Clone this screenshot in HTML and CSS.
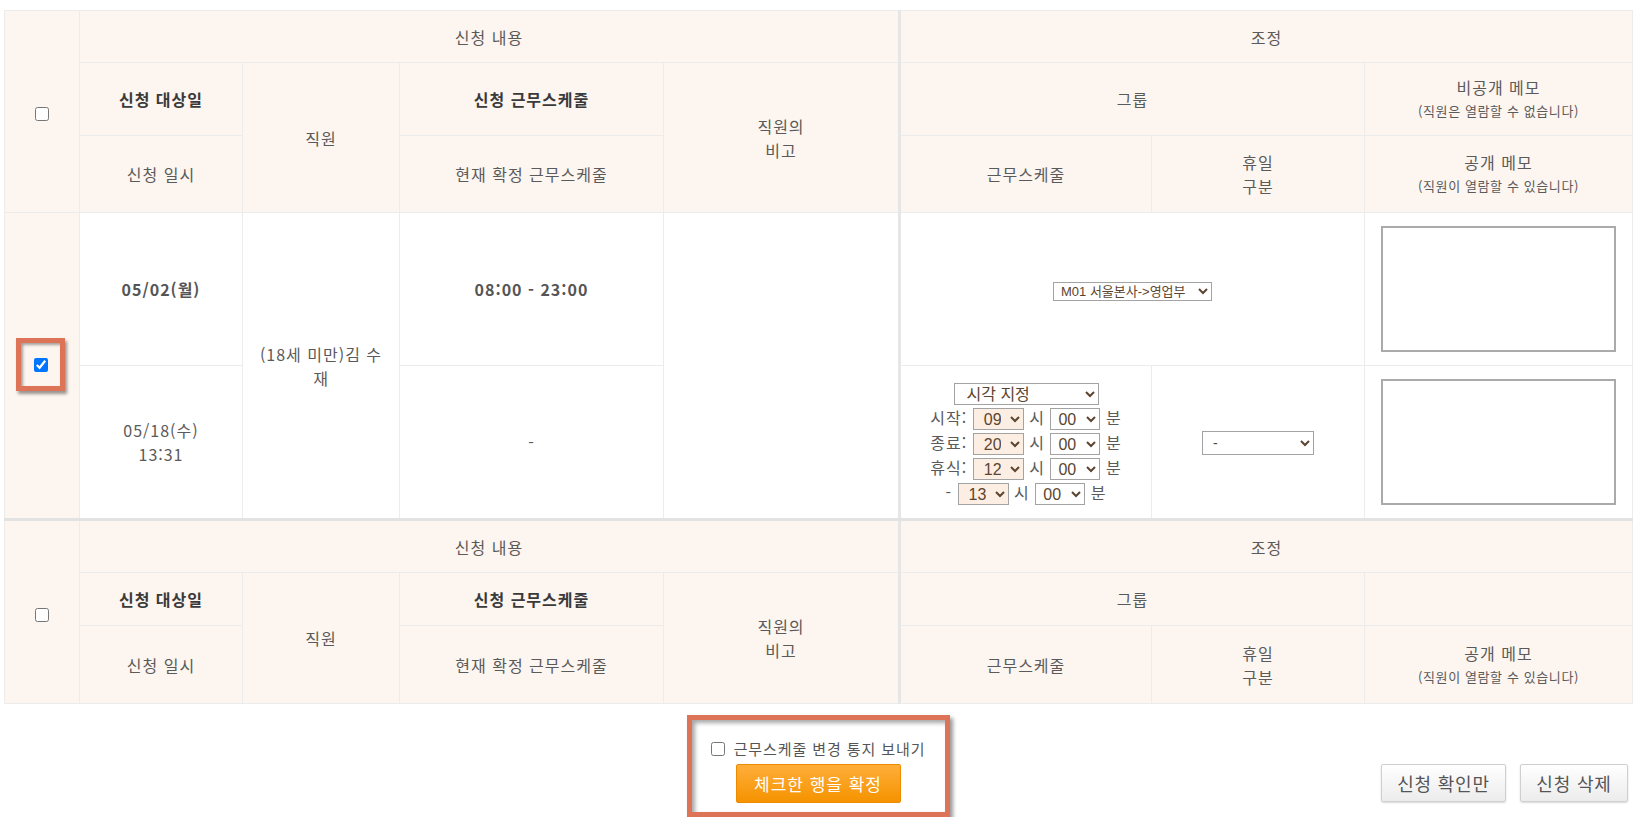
FILE: index.html
```html
<!DOCTYPE html>
<html lang="ko">
<head>
<meta charset="utf-8">
<title>근무스케줄 신청</title>
<link rel="stylesheet" href="styles.css">
</head>
<body>
<div class="page">
  <table class="req">
    <colgroup>
      <col class="c-chk"><col class="c-date"><col class="c-emp"><col class="c-sched"><col class="c-note">
      <col class="c-adj"><col class="c-hol"><col class="c-memo">
    </colgroup>
    <tbody class="hd">
      <tr class="ha">
        <td rowspan="3"><input type="checkbox"></td>
        <td colspan="4">신청 내용</td>
        <td colspan="3" class="sep">조정</td>
      </tr>
      <tr class="hb">
        <td class="b">신청 대상일</td>
        <td rowspan="2">직원</td>
        <td class="b">신청 근무스케줄</td>
        <td rowspan="2">직원의<br>비고</td>
        <td colspan="2" class="sep">그룹</td>
        <td class="memo-h">비공개 메모<br><span class="small">(직원은 열람할 수 없습니다)</span></td>
      </tr>
      <tr class="hc">
        <td>신청 일시</td>
        <td>현재 확정 근무스케줄</td>
        <td class="sep">근무스케줄</td>
        <td>휴일<br>구분</td>
        <td class="memo-h">공개 메모<br><span class="small">(직원이 열람할 수 있습니다)</span></td>
      </tr>
    </tbody>
    <tbody class="data">
      <tr class="d1">
        <td rowspan="2" class="chkcell last"><span class="mark"><input type="checkbox" checked></span></td>
        <td class="strong">05/02(월)</td>
        <td rowspan="2" class="emp last">(18세 미만)김 수재</td>
        <td class="strong">08:00 - 23:00</td>
        <td rowspan="2" class="last"></td>
        <td colspan="2" class="sep"><select class="sel sel-group"><option>M01 서울본사-&gt;영업부</option></select></td>
        <td><textarea class="memo"></textarea></td>
      </tr>
      <tr class="d2">
        <td>05/18(수)<br>13:31</td>
        <td>-</td>
        <td class="sep">
          <div class="timeset">
            <div class="tline"><select class="sel sel-mode"><option>시각 지정</option></select></div>
            <div class="tline">시작: <select class="sel sel-h"><option>09</option></select> 시 <select class="sel sel-m"><option>00</option></select> 분</div>
            <div class="tline">종료: <select class="sel sel-h"><option>20</option></select> 시 <select class="sel sel-m"><option>00</option></select> 분</div>
            <div class="tline">휴식: <select class="sel sel-h"><option>12</option></select> 시 <select class="sel sel-m"><option>00</option></select> 분</div>
            <div class="tline">- <select class="sel sel-h"><option>13</option></select> 시 <select class="sel sel-m"><option>00</option></select> 분</div>
          </div>
        </td>
        <td><select class="sel sel-hol"><option>-</option></select></td>
        <td><textarea class="memo"></textarea></td>
      </tr>
    </tbody>
    <tbody class="hd">
      <tr class="ha2">
        <td rowspan="3"><input type="checkbox"></td>
        <td colspan="4">신청 내용</td>
        <td colspan="3" class="sep">조정</td>
      </tr>
      <tr class="hb2">
        <td class="b">신청 대상일</td>
        <td rowspan="2">직원</td>
        <td class="b">신청 근무스케줄</td>
        <td rowspan="2">직원의<br>비고</td>
        <td colspan="2" class="sep">그룹</td>
        <td></td>
      </tr>
      <tr class="hc2">
        <td>신청 일시</td>
        <td>현재 확정 근무스케줄</td>
        <td class="sep">근무스케줄</td>
        <td>휴일<br>구분</td>
        <td class="memo-h">공개 메모<br><span class="small">(직원이 열람할 수 있습니다)</span></td>
      </tr>
    </tbody>
  </table>

  <div class="footer">
    <div class="f-left"></div>
    <div class="f-center">
      <label class="notify"><input type="checkbox"> 근무스케줄 변경 통지 보내기</label>
      <button class="btn-confirm" type="button">체크한 행을 확정</button>
    </div>
    <div class="f-right">
      <button class="btn-gray btn-ack" type="button">신청 확인만</button>
      <button class="btn-gray btn-del" type="button">신청 삭제</button>
    </div>
  </div>
</div>
</body>
</html>
```

FILE: styles.css
```css
* { box-sizing: border-box; }

body {
  margin: 0;
  font-family: "Noto Sans CJK KR", "Liberation Sans", sans-serif;
  font-size: 16px;
  letter-spacing: 1px;
  color: #5a5a5a;
  background: #fff;
}

.page {
  padding: 10px 13px 0 4px;
}

.req {
  width: 1628px;
  border-collapse: collapse;
  table-layout: fixed;
  border: 1px solid #ececec;
}

.c-chk { width: 75px; }
.c-date { width: 163px; }
.c-emp { width: 157px; }
.c-sched { width: 264px; }
.c-note { width: 236px; }
.c-adj { width: 252px; }
.c-hol { width: 213px; }
.c-memo { width: 268px; }

.req td {
  border: 1px solid #ececec;
  text-align: center;
  vertical-align: middle;
  padding: 0 14px;
  line-height: 24px;
}

.req td.sep {
  border-left: 3px solid #e6e6e6;
}

.hd td {
  background: #fdf5ef;
}

.req td.b {
  font-weight: bold;
  color: #3a3a3a;
}

.ha td { height: 52px; }
.hb td { height: 73px; }
.hc td { height: 77px; }

.ha2 td { height: 53px; }
.hb2 td { height: 53px; }
.hc2 td { height: 78px; }

.d1 td { height: 153px; }
.d2 td { height: 154px; }

.req .d2 td,
.req td.last {
  border-bottom: 3px solid #e2e2e2;
}

.req td.chkcell {
  background: #fdf5ef;
}

.req td.memo-h {
  line-height: 22px;
}

.small {
  font-size: 13px;
  letter-spacing: 0.6px;
  color: #5a5a5a;
}

.strong {
  font-weight: bold;
  color: #555;
}

.req td.emp {
  padding: 0 14px;
}

input[type="checkbox"] {
  width: 14px;
  height: 14px;
  margin: 0;
  vertical-align: middle;
}

.mark {
  display: inline-flex;
  align-items: center;
  justify-content: center;
  width: 49px;
  height: 53px;
  border: 5px solid #dd7457;
  box-shadow: 2px 3px 3px rgba(0, 0, 0, 0.4), inset 2px 2px 3px rgba(0, 0, 0, 0.35);
  margin-top: -2px;
  margin-left: -3px;
}

.sel {
  font-family: "Liberation Sans", "Noto Sans CJK KR", sans-serif;
  color: #5b4530;
  border: 1px solid #a3a3a3;
  border-radius: 0;
  background-color: #fff;
  padding: 0 2px;
  vertical-align: middle;
  letter-spacing: 0;
  line-height: 1;
}

.sel-group {
  width: 159px;
  height: 19px;
  font-size: 13px;
  padding: 0 3px;
}

.timeset {
  display: flex;
  flex-direction: column;
  align-items: center;
}

.tline {
  height: 25px;
  line-height: 25px;
  white-space: nowrap;
}

.sel-mode {
  width: 145px;
  height: 22px;
  font-size: 16px;
  padding: 0 8px;
}

.sel-h {
  width: 51px;
  height: 22px;
  font-size: 16px;
  background-color: #fdeee3;
  padding: 0 6px;
}

.sel-m {
  width: 50px;
  height: 22px;
  font-size: 16px;
  padding: 0 3px;
}

.sel-hol {
  width: 112px;
  height: 24px;
  font-size: 14px;
  padding: 0 6px;
}

.memo {
  display: block;
  margin: 0 auto;
  width: 235px;
  height: 126px;
  border: 2px solid #aaaaaa;
  resize: none;
  background: #fff;
}

.footer {
  width: 1628px;
  display: grid;
  grid-template-columns: 1fr auto 1fr;
  margin-top: 11px;
}

.f-center {
  display: flex;
  flex-direction: column;
  align-items: center;
  width: 263px;
  height: 102px;
  border: 5px solid #dd7457;
  box-shadow: 3px 3px 4px rgba(0, 0, 0, 0.4), inset 3px 3px 4px rgba(0, 0, 0, 0.35);
  padding-top: 19px;
}

.notify {
  display: flex;
  align-items: center;
  gap: 9px;
  font-size: 15px;
  letter-spacing: 0.9px;
  line-height: 20px;
  color: #555;
  height: 20px;
  white-space: nowrap;
}

.btn-confirm {
  margin-top: 5px;
  width: 165px;
  height: 39px;
  border: 1px solid #ee8a00;
  border-radius: 2px;
  background: linear-gradient(#ffae3a, #f59300);
  color: #fff;
  font-family: "Noto Sans CJK KR", "Liberation Sans", sans-serif;
  font-size: 17px;
  letter-spacing: 1px;
  padding: 0;
}

.f-right {
  display: flex;
  justify-content: flex-end;
  align-items: flex-end;
  gap: 14px;
  padding-right: 4px;
  padding-bottom: 15px;
}

.btn-gray {
  height: 38px;
  border: 1px solid #cfcfcf;
  border-radius: 2px;
  background: linear-gradient(#ffffff, #ececec);
  box-shadow: 0 1px 2px rgba(0, 0, 0, 0.15);
  color: #555;
  font-family: "Noto Sans CJK KR", "Liberation Sans", sans-serif;
  font-size: 18px;
  letter-spacing: 0.8px;
  padding: 0;
}

.btn-ack { width: 125px; }
.btn-del { width: 108px; }
```
